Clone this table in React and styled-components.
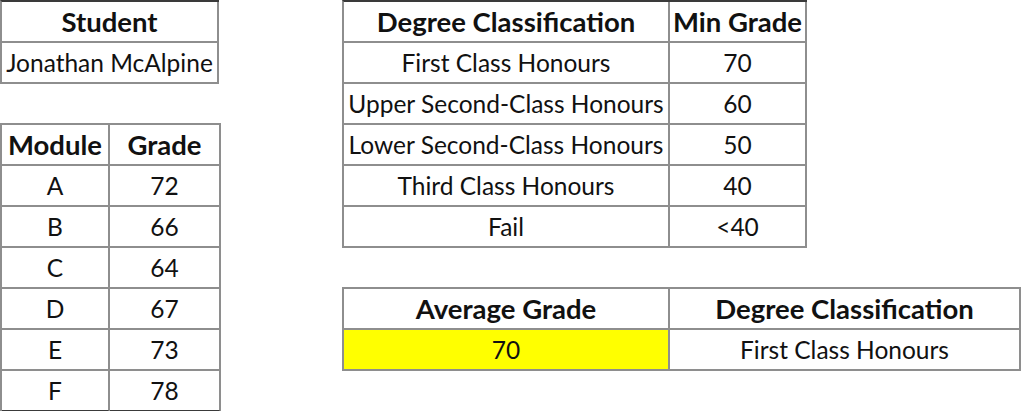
import React from 'react'
import styled, { createGlobalStyle } from 'styled-components'

const GlobalStyle = createGlobalStyle`
    html, body {
        margin: 0;
        padding: 0;
        background: #ffffff;
    }
    body {
        font-family: Lato, "Open Sans", "Liberation Sans", sans-serif;
        color: #000000;
    }
`;

const modules = [
    ['A', 72],
    ['B', 66],
    ['C', 64],
    ['D', 67],
    ['E', 73],
    ['F', 78],
];

const classes = [
    ['First Class Honours', '70'],
    ['Upper Second-Class Honours', '60'],
    ['Lower Second-Class Honours', '50'],
    ['Third Class Honours', '40'],
    ['Fail', '<40'],
];

const App = () => {
    return (
        <Sheet>
            <GlobalStyle />
            <LeftColumn>
                <Table cols="217px" dark>
                    <Cell head>Student</Cell>
                    <Cell>Jonathan McAlpine</Cell>
                </Table>
                <Table cols="108px 111px" bottomDark>
                    <Cell head>Module</Cell>
                    <Cell head>Grade</Cell>
                    {modules.map(([name, grade]) => (
                        <React.Fragment key={name}>
                            <Cell>{name}</Cell>
                            <Cell>{grade}</Cell>
                        </React.Fragment>
                    ))}
                </Table>
            </LeftColumn>
            <RightColumn>
                <Table cols="326px 137px" dark>
                    <Cell head>Degree Classification</Cell>
                    <Cell head>Min Grade</Cell>
                    {classes.map(([name, min]) => (
                        <React.Fragment key={name}>
                            <Cell>{name}</Cell>
                            <Cell>{min}</Cell>
                        </React.Fragment>
                    ))}
                </Table>
                <Table cols="326px 351px">
                    <Cell head>Average Grade</Cell>
                    <Cell head>Degree Classification</Cell>
                    <Cell highlight>70</Cell>
                    <Cell>First Class Honours</Cell>
                </Table>
            </RightColumn>
        </Sheet>
    );
}

export default App

const Sheet = styled.div`
    display: flex;
    gap: 121px;
    width: 1024px;
    height: 411px;
    overflow: hidden;
`;

const LeftColumn = styled.div`
    display: flex;
    flex-direction: column;
    gap: 39px;
`;

const RightColumn = styled.div`
    display: flex;
    flex-direction: column;
    gap: 39px;
`;

const Table = styled.div`
    display: grid;
    grid-template-columns: ${p => p.cols};
    grid-auto-rows: 41px;
    align-self: flex-start;
    border-top: 2px solid ${p => (p.dark ? '#3a3a3a' : '#8e8e8e')};
    border-left: 2px solid #8e8e8e;
    ${p => p.bottomDark && `
        > div:nth-last-child(-n+2) {
            border-bottom-color: #3a3a3a;
        }
    `}
`;

const Cell = styled.div`
    box-sizing: border-box;
    display: flex;
    align-items: center;
    justify-content: center;
    border-right: 2px solid #8e8e8e;
    border-bottom: 2px solid #8e8e8e;
    background: ${p => (p.highlight ? '#ffff00' : '#ffffff')};
    font-size: ${p => (p.head ? '27.5px' : '24.5px')};
    font-weight: ${p => (p.head ? 700 : 400)};
    color: #111111;
    white-space: nowrap;
    overflow: hidden;
    padding-bottom: 1px;
`;
